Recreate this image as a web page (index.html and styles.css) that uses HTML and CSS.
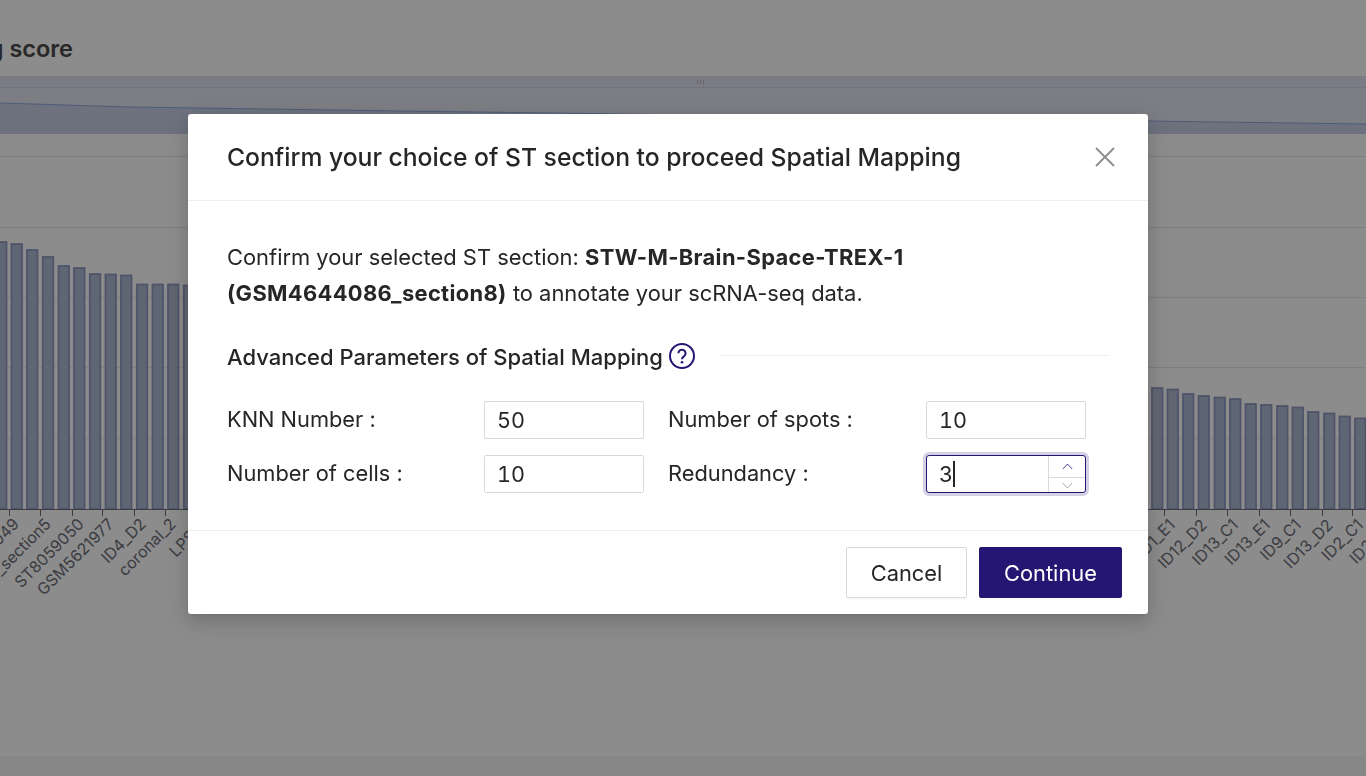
FILE: index.html
```html
<!DOCTYPE html>
<html lang="en">
<head>
  <meta charset="UTF-8">
  <title>Spatial Mapping</title>
  <link rel="stylesheet" href="styles.css">
</head>
<body>

  <!-- chart page behind the mask -->
  <svg class="chart" width="1366" height="776" viewBox="0 0 1366 776">
    <text class="chart-title" x="73" y="57" text-anchor="end">Mapping score</text>

    <rect class="zoom-band" x="0" y="76" width="1366" height="58"></rect>
    <polygon class="zoom-area" points="0,103 130,107 400,111 700,115 1000,119 1366,124 1366,134 0,134"></polygon>
    <rect class="zoom-top" x="0" y="76" width="1366" height="11"></rect>
    <line class="zoom-edge" x1="0" y1="87.5" x2="1366" y2="87.5"></line>
    <polyline class="zoom-line" points="0,103 130,107 400,111 700,115 1000,119 1366,124"></polyline>
    <path class="zoom-grip" d="M697.5 80v4M700.5 80v4M703.5 80v4"></path>

    <path class="grid" d="M0 156.5H1366M0 227.5H1366M0 297.5H1366M0 367.5H1366M0 438.5H1366"></path>

    <g class="bars">
      <rect x="-4" y="242" width="10.5" height="267"></rect>
      <rect x="11.500" y="244" width="10.5" height="265"></rect>
      <rect x="27" y="250" width="10.5" height="259"></rect>
      <rect x="42.800" y="257" width="10.5" height="252"></rect>
      <rect x="58.500" y="266" width="10.5" height="243"></rect>
      <rect x="74" y="268" width="10.5" height="241"></rect>
      <rect x="89.800" y="274" width="10.5" height="235"></rect>
      <rect x="105.500" y="274.5" width="10.5" height="234.5"></rect>
      <rect x="121" y="275.5" width="10.5" height="233.5"></rect>
      <rect x="136.800" y="284.5" width="10.5" height="224.500"></rect>
      <rect x="152.500" y="284.5" width="10.5" height="224.500"></rect>
      <rect x="168" y="284.5" width="10.5" height="224.500"></rect>
      <rect x="183.800" y="285.5" width="10.5" height="223.500"></rect>

      <rect x="1152" y="388" width="10.5" height="121"></rect>
      <rect x="1167.500" y="389.5" width="10.5" height="119.5"></rect>
      <rect x="1183" y="394" width="10.5" height="115"></rect>
      <rect x="1198.500" y="396" width="10.5" height="113"></rect>
      <rect x="1214.500" y="397.5" width="10.5" height="111.5"></rect>
      <rect x="1230" y="399" width="10.5" height="110"></rect>
      <rect x="1245.500" y="404" width="10.5" height="105"></rect>
      <rect x="1261" y="405" width="10.5" height="104"></rect>
      <rect x="1277" y="406" width="10.5" height="103"></rect>
      <rect x="1292.500" y="407.5" width="10.5" height="101.5"></rect>
      <rect x="1308" y="412" width="10.5" height="97"></rect>
      <rect x="1324" y="413.5" width="10.5" height="95.5"></rect>
      <rect x="1339.500" y="416.5" width="10.5" height="92.5"></rect>
      <rect x="1355" y="418.5" width="10.5" height="90.5"></rect>
    </g>

    <path class="axis" d="M0 509.5H1366"></path>
    <path class="axis" d="M9.500 509v7M40.500 509v7M72.500 509v7M102.500 509v7M134.500 509v7M165.500 509v7M196.500 509v7M1164.500 509v7M1196.500 509v7M1227.500 509v7M1259.500 509v7M1290.500 509v7M1322.500 509v7M1352.500 509v7"></path>

    <g class="axis-labels" text-anchor="end">
      <text transform="translate(20 525) rotate(-45)">GSM4644049</text>
      <text transform="translate(52 525) rotate(-45)">coronal_section5</text>
      <text transform="translate(85 525) rotate(-45)">ST8059050</text>
      <text transform="translate(115 525) rotate(-45)">GSM5621977</text>
      <text transform="translate(147 525) rotate(-45)">ID4_D2</text>
      <text transform="translate(177 525) rotate(-45)">coronal_2</text>
      <text transform="translate(209 525) rotate(-45)">LPS_2</text>
      <text transform="translate(1176 526) rotate(-45)">ID1_E1</text>
      <text transform="translate(1208 526) rotate(-45)">ID12_D2</text>
      <text transform="translate(1239 526) rotate(-45)">ID13_C1</text>
      <text transform="translate(1271 526) rotate(-45)">ID13_E1</text>
      <text transform="translate(1302 526) rotate(-45)">ID9_C1</text>
      <text transform="translate(1334 526) rotate(-45)">ID13_D2</text>
      <text transform="translate(1364 526) rotate(-45)">ID2_C1</text>
      <text transform="translate(1395 526) rotate(-45)">ID2_D2</text>
    </g>

    <rect class="page-foot" x="0" y="756" width="1366" height="20"></rect>
  </svg>

  <div class="mask">
    <div class="modal">

      <div class="modal-header">
        <h2>Confirm your choice of ST section to proceed Spatial Mapping</h2>
        <svg class="close" width="20" height="20" viewBox="0 0 20 20">
          <path d="M1 1L19 19M19 1L1 19"></path>
        </svg>
      </div>

      <div class="modal-body">
        <p class="intro">Confirm your selected ST section: <strong>STW-M-Brain-Space-TREX-1 (GSM4644086_section8)</strong> to annotate your scRNA-seq data.</p>

        <div class="divider">
          <span class="divider-text">Advanced Parameters of Spatial Mapping</span>
          <svg class="help" width="26" height="26" viewBox="0 0 26 26">
            <circle cx="13" cy="13" r="12"></circle>
            <path d="M9.400 10.300a3.600 3.600 0 1 1 5.600 3c-1.300.9-2 1.500-2 2.900"></path>
            <circle class="dot" cx="13" cy="19.300" r="1.300"></circle>
          </svg>
          <span class="divider-line"></span>
        </div>

        <div class="params">
          <label class="param-label">KNN Number :</label>
          <input class="param-input" type="text" value="50">
          <label class="param-label">Number of spots :</label>
          <input class="param-input" type="text" value="10">
          <label class="param-label">Number of cells :</label>
          <input class="param-input" type="text" value="10">
          <label class="param-label">Redundancy :</label>
          <div class="param-input focused">
            <span class="value">3</span><span class="caret"></span>
            <div class="steppers">
              <span class="step step-up">
                <svg width="11" height="7" viewBox="0 0 11 7"><path class="up" d="M.8 6L5.500 1l4.700 5"></path></svg>
              </span>
              <span class="step">
                <svg width="11" height="7" viewBox="0 0 11 7"><path d="M.8 1l4.700 5 4.700-5"></path></svg>
              </span>
            </div>
          </div>
        </div>
      </div>

      <div class="modal-footer">
        <button class="btn">Cancel</button>
        <button class="btn btn-primary">Continue</button>
      </div>

    </div>
  </div>

</body>
</html>
```

FILE: styles.css
```css
html, body {
  margin: 0;
  height: 100%;
  overflow: hidden;
}
body {
  font-family: Inter, "Liberation Sans", sans-serif;
  background: #fff;
  color: #262626;
}

/* background chart */
.chart {
  position: absolute;
  top: 0;
  left: 0;
}
.chart-title {
  font-size: 23.500px;
  font-weight: 600;
  fill: #4a4a4a;
}
.zoom-band {
  fill: #e2e5f0;
}
.zoom-area {
  fill: #c6cfe6;
}
.zoom-top {
  fill: #dee1f0;
}
.zoom-edge {
  stroke: #d3d5e0;
  stroke-width: 1;
}
.zoom-line {
  fill: none;
  stroke: #8fa6dc;
  stroke-width: 1;
}
.zoom-grip {
  fill: none;
  stroke: #bbb;
  stroke-width: 1;
}
.grid {
  fill: none;
  stroke: #e6e6ee;
  stroke-width: 1;
}
.bars rect {
  fill: #aebbd1;
  stroke: #929ac4;
  stroke-width: 1.8;
}
.axis {
  fill: none;
  stroke: #6e7079;
  stroke-width: 1;
}
.axis-labels text {
  font-size: 16px;
  fill: #6e7079;
}
.page-foot {
  fill: #f6f6f6;
}

/* modal */
.mask {
  position: fixed;
  top: 0;
  left: 0;
  right: 0;
  bottom: 0;
  background: rgba(0, 0, 0, 0.45);
  display: flex;
  justify-content: center;
  align-items: flex-start;
  padding: 114px 30px 0 0;
  box-sizing: border-box;
}
.modal {
  width: 960px;
  height: 500px;
  background: #fff;
  border-radius: 3px;
  box-shadow: 0 6px 16px rgba(0, 0, 0, 0.12), 0 3px 6px -4px rgba(0, 0, 0, 0.12), 0 9px 28px 8px rgba(0, 0, 0, 0.08);
  display: flex;
  flex-direction: column;
}
.modal-header {
  height: 86px;
  padding: 0 33px 0 39px;
  border-bottom: 1px solid #f0f0f0;
  display: flex;
  align-items: center;
  justify-content: space-between;
}
.modal-header h2 {
  margin: 0;
  font-size: 24.700px;
  font-weight: 500;
  color: #262626;
}
.close path {
  fill: none;
  stroke: #8c8c8c;
  stroke-width: 1.800;
}
.modal-body {
  flex: 1;
  padding: 38px 38px 0 39px;
}
.intro {
  margin: 0;
  width: 720px;
  font-size: 21.900px;
  line-height: 36px;
}
.intro strong {
  font-weight: 700;
  letter-spacing: 0.35px;
}
.divider {
  display: flex;
  align-items: center;
  margin-top: 28px;
  height: 36px;
}
.divider-text {
  font-size: 22px;
  font-weight: 500;
}
.help {
  margin: 0 0 2px 6px;
}
.help circle {
  fill: none;
  stroke: #261673;
  stroke-width: 2;
}
.help path {
  fill: none;
  stroke: #261673;
  stroke-width: 2;
}
.help .dot {
  fill: #261673;
  stroke: none;
}
.divider-line {
  flex: 1;
  margin: 0 0 4px 26px;
  border-top: 1px solid #f0f0f0;
}
.params {
  display: grid;
  grid-template-columns: 257px 160px 282px 160px;
  row-gap: 16px;
  margin-top: 26px;
  align-items: center;
}
.param-label {
  font-size: 21.800px;
  padding-bottom: 2px;
}
.param-label:nth-child(3),
.param-label:nth-child(7) {
  margin-left: 24px;
}
.param-input {
  box-sizing: border-box;
  width: 160px;
  height: 38px;
  padding: 0 12px;
  border: 1px solid #d9d9d9;
  border-radius: 2px;
  font-family: inherit;
  font-size: 21.600px;
  font-variant-numeric: tabular-nums;
  color: #262626;
  outline: none;
  background: #fff;
}
.focused {
  position: relative;
  display: flex;
  align-items: center;
  border-color: #261673;
  border-radius: 3px;
  box-shadow: 0 0 0 3px #d4d0e6;
}
.caret {
  width: 2px;
  height: 26px;
  background: #262626;
}
.steppers {
  position: absolute;
  top: 0;
  right: 0;
  bottom: 0;
  width: 36px;
  border-left: 1px solid #d9d9d9;
  display: flex;
  flex-direction: column;
}
.step {
  flex: 1;
  display: flex;
  align-items: center;
  justify-content: center;
}
.step-up {
  flex: none;
  height: 21px;
}
.step + .step {
  border-top: 1px solid #d9d9d9;
}
.step path {
  fill: none;
  stroke: #a6a6a6;
  stroke-width: 1;
}
.step path.up {
  stroke: #4a3c8c;
}
.modal-footer {
  box-sizing: border-box;
  height: 84px;
  border-top: 1px solid #f0f0f0;
  padding: 16px 26px 0 0;
  display: flex;
  justify-content: flex-end;
  align-items: flex-start;
  gap: 12px;
}
.btn {
  height: 51px;
  width: 121px;
  font-family: inherit;
  font-size: 21.800px;
  color: #262626;
  background: #fff;
  border: 1px solid #d9d9d9;
  border-radius: 2px;
  box-shadow: 0 2px 0 rgba(0, 0, 0, 0.02);
}
.btn-primary {
  width: 143px;
  color: #fff;
  background: #261673;
  border-color: #261673;
}
```
